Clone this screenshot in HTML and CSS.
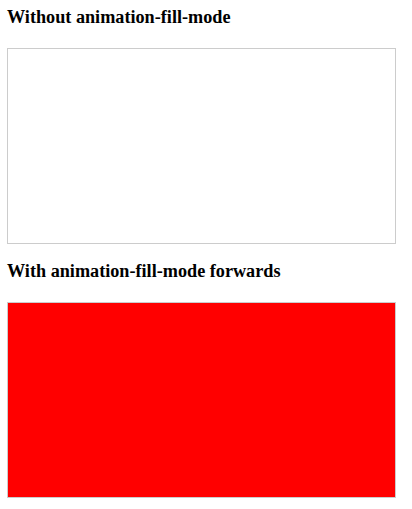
FILE: index.html
```html
<!DOCTYPE html>
<html>
<head>
<meta charset="utf-8">
<link rel="stylesheet" href="styles.css">
</head>
<body>
<section class="demo">
  <h3 class="title">Without animation-fill-mode</h3>
  <div class="box"></div>
</section>
<section class="demo">
  <h3 class="title">With animation-fill-mode forwards</h3>
  <div class="box box-red"></div>
</section>
</body>
</html>
```
FILE: styles.css
```css
html, body {
  margin: 0;
  padding: 0;
  background: #fff;
}
body {
  padding: 0 16px 0 7px;
  font-family: "Liberation Serif", "Times New Roman", serif;
  color: #000;
}
.demo {
  display: flex;
  flex-direction: column;
}
.title {
  font-size: 18.2px;
  font-weight: bold;
  margin: 6px 0 0 0;
  height: 42px;
  line-height: 22px;
}
.box {
  height: 194px;
  border: 1px solid #ccc;
  background: #fff;
}
.box-red {
  background: #f00;
}
.demo + .demo .title {
  margin-top: 16px;
}
```
